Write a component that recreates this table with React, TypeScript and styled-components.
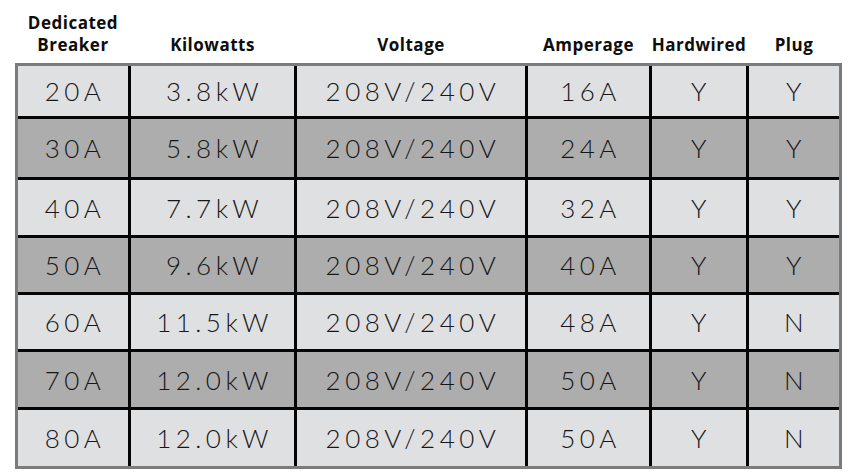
import { createGlobalStyle } from "styled-components";
import styled from "styled-components";

const rows = [
	["20A", "3.8kW", "208V/240V", "16A", "Y", "Y"],
	["30A", "5.8kW", "208V/240V", "24A", "Y", "Y"],
	["40A", "7.7kW", "208V/240V", "32A", "Y", "Y"],
	["50A", "9.6kW", "208V/240V", "40A", "Y", "Y"],
	["60A", "11.5kW", "208V/240V", "48A", "Y", "N"],
	["70A", "12.0kW", "208V/240V", "50A", "Y", "N"],
	["80A", "12.0kW", "208V/240V", "50A", "Y", "N"],
];

const headers = [
	["Dedicated", "Breaker"],
	["Kilowatts"],
	["Voltage"],
	["Amperage"],
	["Hardwired"],
	["Plug"],
];

const App = () => {
	return (
		<>
			<GlobalStyle />
			<Page>
				<HeaderRow>
					{headers.map((lines, i) => (
						<HeaderCell key={i}>
							{lines.map((l) => (
								<span key={l}>{l}</span>
							))}
						</HeaderCell>
					))}
				</HeaderRow>
				<Table>
					{rows.map((row, r) =>
						row.map((value, c) => (
							<Cell key={`${r}-${c}`} $dark={r % 2 === 1}>
								{value}
							</Cell>
						))
					)}
				</Table>
			</Page>
		</>
	);
};

const GlobalStyle = createGlobalStyle`
	body {
		margin: 0;
		background: #ffffff;
	}
`;

const columns = "110px 163px 228px 121px 94px 90px";

const Page = styled.div`
	width: 849px;
	padding-left: 15px;
	box-sizing: border-box;
`;

const HeaderRow = styled.div`
	display: grid;
	grid-template-columns: ${columns};
	column-gap: 3px;
	padding: 0 3px;
	height: 63px;
	box-sizing: border-box;
	padding-bottom: 7px;
	align-items: end;
`;

const HeaderCell = styled.div`
	display: flex;
	flex-direction: column;
	align-items: center;
	font-family: "Open Sans", sans-serif;
	font-weight: 700;
	font-size: 17px;
	letter-spacing: 0.5px;
	line-height: 22px;
	color: #0d0d0d;
	white-space: nowrap;
`;

const Table = styled.div`
	display: grid;
	grid-template-columns: ${columns};
	grid-template-rows: 50px 58px 55px 54px 54px 55px 56px;
	gap: 3px;
	width: max-content;
	background: #050505;
	border: 3px solid #7b7b7b;
`;

const Cell = styled.div<{ $dark: boolean }>`
	display: flex;
	align-items: center;
	justify-content: center;
	padding-left: 4px;
	background: ${(p) => (p.$dark ? "#adadad" : "#dfe0e2")};
	font-family: "Lato", sans-serif;
	font-weight: 300;
	font-size: 26px;
	letter-spacing: 4.5px;
	color: #161616;
`;

export default App;
